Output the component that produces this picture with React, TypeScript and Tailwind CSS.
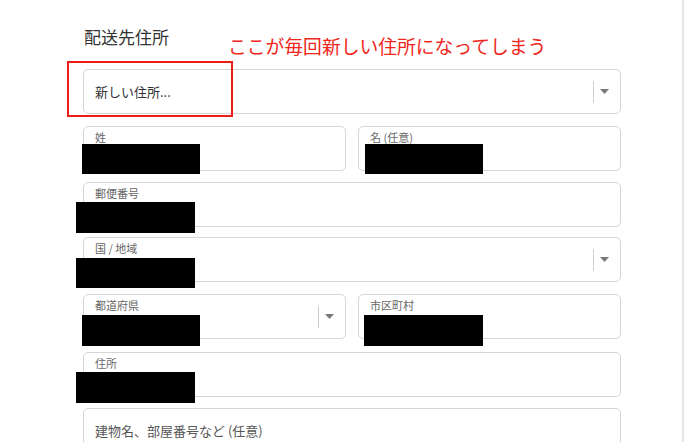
import React from "react";

const Arrow = () => (
  <svg width="9" height="5" viewBox="0 0 9 5" className="block">
    <polygon points="0,0 9,0 4.5,5" fill="#7a7a7a" />
  </svg>
);

const Dropdown = () => (
  <div className="flex h-full items-center">
    <div className="h-[22px] w-px bg-[#cfcfcf]" />
    <div className="ml-[6px] mr-[11px]">
      <Arrow />
    </div>
  </div>
);

function Field({
  label,
  boxClass,
  select,
  className,
}: {
  label: string;
  boxClass: string;
  select?: boolean;
  className?: string;
}) {
  return (
    <div
      className={
        "relative flex h-[45px] rounded-[5px] border border-[#d6d6d6] bg-white " +
        (className ?? "")
      }
    >
      <div className="flex-1 pl-[11px] pt-[5px] text-[11px] leading-[11px] text-[#666666]">
        {label}
      </div>
      {select && <Dropdown />}
      <div className={"absolute bg-black " + boxClass} />
    </div>
  );
}

export default function App() {
  return (
    <div
      className="relative h-[442px] w-[684px] overflow-hidden border-r-2 border-[#e6e6e6] bg-white"
      style={{ fontFamily: '"Noto Sans CJK JP", "Noto Sans", sans-serif' }}
    >
      <div className="w-[621px] pl-[83px] pt-[28px]">
        <h2 className="pl-px text-[17px] font-normal leading-[17px] text-[#333333]">
          配送先住所
        </h2>

        <div className="mt-[24px] flex h-[45px] items-center rounded-[5px] border border-[#d6d6d6] bg-white">
          <div className="flex-1 pl-[11px] text-[13px] leading-[13px] text-[#333333]">
            新しい住所...
          </div>
          <Dropdown />
        </div>

        <div className="mt-[12px] grid grid-cols-2 gap-[12px]">
          <Field label="姓" boxClass="left-[-2px] top-[17px] h-[30px] w-[118px]" />
          <Field label="名 (任意)" boxClass="left-[6px] top-[17px] h-[30px] w-[118px]" />
        </div>

        <Field
          className="mt-[11px]"
          label="郵便番号"
          boxClass="left-[-8px] top-[19px] h-[31px] w-[119px]"
        />

        <Field
          className="mt-[10px]"
          label="国 / 地域"
          select
          boxClass="left-[-8px] top-[20px] h-[30px] w-[119px]"
        />

        <div className="mt-[12px] grid grid-cols-2 gap-[12px]">
          <Field
            label="都道府県"
            select
            boxClass="left-[-2px] top-[20px] h-[31px] w-[118px]"
          />
          <Field label="市区町村" boxClass="left-[5px] top-[20px] h-[31px] w-[119px]" />
        </div>

        <Field
          className="mt-[13px]"
          label="住所"
          boxClass="left-[-8px] top-[19px] h-[31px] w-[119px]"
        />

        <div className="mt-[11px] flex h-[45px] items-center rounded-[5px] border border-[#d6d6d6] bg-white">
          <div className="pl-[11px] text-[13px] leading-[13px] text-[#555555]">
            建物名、部屋番号など (任意)
          </div>
        </div>
      </div>

      <div className="absolute left-[228px] top-[36px] whitespace-nowrap text-[18.8px] leading-[19px] text-[#f0261c]">
        ここが毎回新しい住所になってしまう
      </div>
      <div className="absolute left-[67px] top-[61px] h-[56px] w-[166px] border-2 border-[#ec1c16]" />
    </div>
  );
}
